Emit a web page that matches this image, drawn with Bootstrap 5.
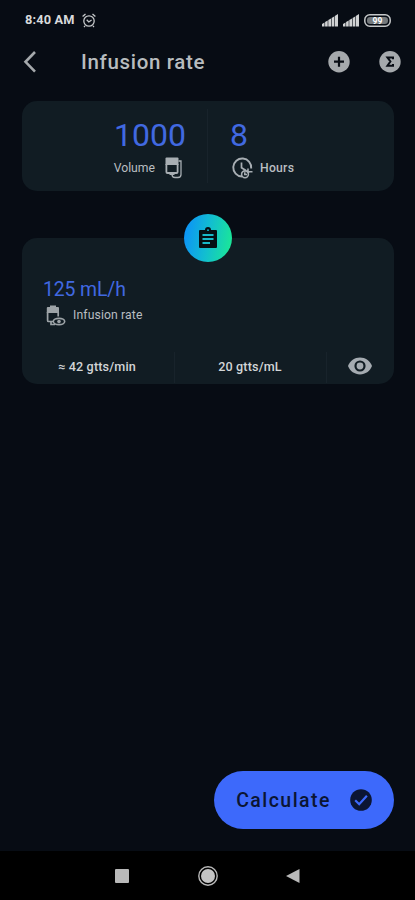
<!DOCTYPE html>
<html lang="en">
<head>
<meta charset="utf-8">
<meta name="viewport" content="width=device-width, initial-scale=1">
<title>Infusion rate</title>
<link href="https://cdn.jsdelivr.net/npm/bootstrap@5.3.0/dist/css/bootstrap.min.css" rel="stylesheet">
<style>
body{background:#070c14;color:#c0c4c7;font-family:Roboto,"Liberation Sans",sans-serif;overflow:hidden}
svg{display:block;flex:none}
.status{height:40px;padding:0 24px 0 25px;color:#d8dadb;font-size:12.8px;font-weight:700}
.clock{width:49px;letter-spacing:.15px;white-space:nowrap}
.signal{margin-left:5px}
.topbar{height:44px;padding:0 14px 0 23px}
.title{font-size:20.5px;font-weight:500;letter-spacing:.67px;margin-left:43px;line-height:24px;color:#b8bcbf}
.sum{margin-left:29px}
.panel{background:#111c23;border-radius:15px;margin:0 21px 0 22px}
.inputs{height:90px;margin-top:17px}
.volume{width:185px;padding:16px 21px 0 0}
.hours{width:186px;padding:16px 0 0 22px}
.split{width:1px;background:#18232b}
.short{height:31px}
.value{color:#4169e1;font-size:32px;line-height:37px;margin-bottom:3px}
.caption-row{font-size:12.2px;line-height:22px;color:#b9bec1}
.hours .caption-row{padding-left:2px}
.strong-caption{margin-left:7px;font-weight:500;letter-spacing:.25px}
.bag{margin:0 3px 0 10px}
.result{height:146px;margin-top:47px}
.round{width:48px;height:48px;top:-24px;left:162px;background:linear-gradient(100deg,#0c92f8 5%,#12bed0 50%,#1be896 95%)}
.summary{padding:39px 0 0 21px}
.summary .caption-row{padding:2px 0 0 3px}
.rate-caption{margin-left:7px;letter-spacing:.12px}
.rate{color:#4169e1;font-size:19.4px;line-height:25px;letter-spacing:-.1px}
.drops{height:34px;font-size:12.6px;font-weight:500;color:#d2d5d7}
.drop-rate{width:152px;padding-right:2px;letter-spacing:.15px}
.drop-factor{width:151px;padding-right:1px;letter-spacing:.15px}
.eye{margin:0 0 2px 21px}
.calc{width:180px;height:58px;background:#3d69fb;color:#0b1533;font-size:19.5px;font-weight:500;letter-spacing:1.45px;margin-right:21px;margin-bottom:22px}
.calc span{padding-top:2px}
.tick{margin-left:19px}
.sysnav{height:49px;background:#000;padding:0 115px}
</style>
</head>
<body>
<div class="d-flex flex-column vh-100">
<div class="status d-flex align-items-center">
<span class="clock">8:40 AM</span>
<svg class="ms-2" width="14" height="15" viewBox="0 0 14 15" fill="none" stroke="#c5c8ca" stroke-width="1.3"><circle cx="7" cy="8" r="5.2"/><path d="M.6 3.5 3.5.9M13.4 3.5 10.5.9M4.7 6.8 6.8 9 9.6 7M3 13l-1 1M11 13l1 1"/></svg>
<svg class="ms-auto" width="16" height="13" viewBox="0 0 16 13" fill="#d0d2d3"><path d="M0 12.5V10l2.5-1.5v4zM3.1 12.5V8l2.6-1.5v6zM6.3 12.5V6L9 4.4v8.1zM9.6 12.5V4l2.6-1.6v10.1zM12.8 12.5V2L16 0v12.5z"/></svg>
<svg class="signal" width="16" height="13" viewBox="0 0 16 13" fill="#d0d2d3"><path d="M0 12.5V10l2.5-1.5v4zM3.1 12.5V8l2.6-1.5v6zM6.3 12.5V6L9 4.4v8.1zM9.6 12.5V4l2.6-1.6v10.1zM12.8 12.5V2L16 0v12.5z"/></svg>
<svg class="signal" width="27" height="13" viewBox="0 0 27 13"><rect x=".8" y=".8" width="25.4" height="11.4" rx="5" fill="none" stroke="#c5c8c9" stroke-width="1.5"/><rect x="3" y="3" width="21" height="7" rx="3.2" fill="#74797c"/><text x="13.5" y="9.8" text-anchor="middle" font-size="8.5" font-weight="700" fill="#fff">99</text></svg>
</div>
<div class="topbar d-flex align-items-center">
<svg width="15" height="22" viewBox="0 1 15 22" fill="none" stroke="#a5a9ac" stroke-width="2.6"><path d="M12 2 2.5 11.8 12 21.6"/></svg>
<div class="title">Infusion rate</div>
<svg class="ms-auto" width="22" height="22" viewBox="0 0 22 22"><circle cx="11" cy="10.7" r="10.7" fill="#a5a9ac"/><path d="M11 5.7v10M6 10.7h10" stroke="#080d14" stroke-width="2.2"/></svg>
<svg class="sum" width="22" height="22" viewBox="0 0 22 22"><circle cx="11" cy="10.7" r="10.7" fill="#a5a9ac"/><path d="M14 8.2V6.4H8.4l3 4.1-3 4.3H14V13" fill="none" stroke="#080d14" stroke-width="2"/></svg>
</div>
<div class="panel inputs d-flex">
<div class="volume flex-fill d-flex flex-column align-items-end">
<div class="value">1000</div>
<div class="caption-row d-flex align-items-center"><span>Volume</span>
<svg class="bag" width="18" height="22" viewBox="0 0 18 22" fill="none" stroke="#a8aeb3"><path d="M.5 1.5q0-1 1-1h11q1 0 1 1V8H.5z" fill="#a8aeb3" stroke="none"/><path d="M1.4 7v8q0 1 1 1h9.2q1 0 1-1V7" stroke-width="1.8"/><path d="M7 16v1.5q0 3 3 3h3q3 0 3-3V4h-2.5" stroke-width="1.3"/><path d="M4.5 16h5v2h-5z" fill="#a8aeb3" stroke="none"/></svg></div>
</div>
<div class="split my-2"></div>
<div class="hours flex-fill">
<div class="value">8</div>
<div class="caption-row d-flex align-items-center"><svg width="21" height="22" viewBox="0 0 21 22" fill="none" stroke="#a8aeb3"><path d="M19.2 11.5A9 9 0 1 0 10 19.5" stroke-width="1.9"/><path d="M9.5 5.5v5.2l4.5 2.8" stroke-width="1.7"/><circle cx="13" cy="17.3" r="3.4" stroke-width="1.6"/><path d="M12.8 15.2v2.3H15M16 11.5v3.2h4.5M14.5 13.5l2.5 2.5" stroke-width="1.6"/></svg><span class="strong-caption">Hours</span></div>
</div>
</div>
<div class="panel result position-relative d-flex flex-column">
<div class="round rounded-circle position-absolute d-flex align-items-center justify-content-center"><svg width="20" height="23" viewBox="0 0 20 23"><path d="M2 3h5a3 3 0 0 1 6 0h5q1 0 1 1v16q0 1-1 1H2q-1 0-1-1V4q0-1 1-1" fill="#051014"/><circle cx="10" cy="3.2" r=".9" fill="#14bacd"/><path d="M4.5 8h11M4.5 12h11M4.5 16H12" stroke="#18b9c9" stroke-width="1.9"/></svg></div>
<div class="summary"><div class="rate">125 mL/h</div>
<div class="caption-row d-flex align-items-center"><svg width="20" height="21" viewBox="0 0 20 21" fill="none" stroke="#9da3a7"><path d="M.8 3q0-1 1-1H4V.5h6V2h2q1 0 1 1v5H.8z" fill="#9da3a7" stroke="none"/><path d="M1.6 7v8.5q0 1 1 1H7M12.2 7v4.5M5 17v2.5h4" stroke-width="1.7"/><ellipse cx="13" cy="16.5" rx="5.7" ry="3.1" fill="#111c23" stroke-width="1.6"/><circle cx="13" cy="16.5" r="1.8" fill="#9da3a7" stroke="none"/></svg><span class="rate-caption">Infusion rate</span></div></div>
<div class="drops mt-auto d-flex align-items-center text-center">
<div class="drop-rate">≈ 42 gtts/min</div><div class="split short"></div>
<div class="drop-factor">20 gtts/mL</div><div class="split short"></div>
<svg class="eye" width="24" height="18" viewBox="0 0 24 18"><path d="M0 9C2 3.8 6.6.6 12 .6S22 3.8 24 9c-2 5.2-6.6 8.4-12 8.4S2 14.2 0 9" fill="#a5abb1"/><circle cx="12" cy="9" r="4.5" fill="none" stroke="#111c23" stroke-width="2.2"/></svg>
</div>
</div>
<button class="calc btn rounded-pill border-0 p-0 mt-auto ms-auto d-flex align-items-center justify-content-center"><span>Calculate</span><svg class="tick" width="22" height="22" viewBox="0 0 22 22"><circle cx="11" cy="11" r="10.8" fill="#0b1533"/><path d="m5.2 11.2 4 4 7.7-8.4" fill="none" stroke="#3d69fb" stroke-width="2.2"/></svg></button>
<div class="sysnav d-flex align-items-center justify-content-between">
<svg width="14" height="14"><rect width="14" height="14" rx="1" fill="#b9b9b9"/></svg>
<svg width="20" height="20" viewBox="0 0 20 20"><circle cx="10" cy="10" r="9.2" fill="none" stroke="#b9b9b9" stroke-width="1.4"/><circle cx="10" cy="10" r="7" fill="#c4c4c4"/></svg>
<svg width="14" height="14"><path d="M0 7 13.5 0v14z" fill="#b9b9b9"/></svg>
</div>
</div>
<script src="https://cdn.jsdelivr.net/npm/bootstrap@5.3.0/dist/js/bootstrap.bundle.min.js"></script>
</body>
</html>
